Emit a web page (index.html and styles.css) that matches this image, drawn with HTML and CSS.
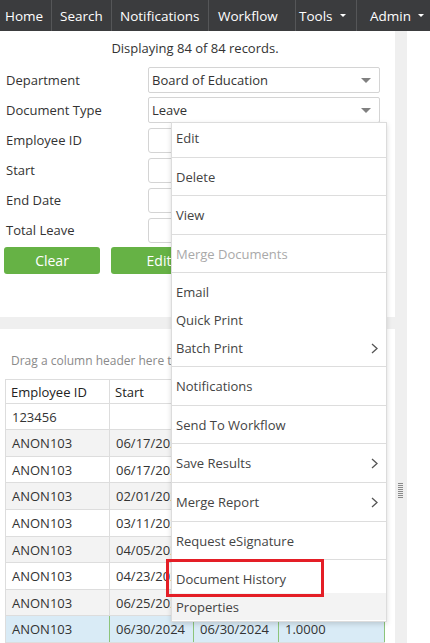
FILE: index.html
```html
<!DOCTYPE html>
<html lang="en">
<head>
    <meta charset="UTF-8">
    <meta name="viewport" content="width=device-width, initial-scale=1.0">
    <title>Document Search</title>
    <link rel="stylesheet" href="styles.css">
</head>
<body>

<!-- Top navigation -->
<div class="topnav">
    <div class="nav-item nav-home">Home</div>
    <div class="nav-item nav-search">Search</div>
    <div class="nav-item nav-notif">Notifications</div>
    <div class="nav-item nav-workflow">Workflow</div>
    <div class="nav-item nav-tools">Tools <span class="nav-caret"></span></div>
    <div class="nav-item nav-admin">Admin <span class="nav-caret"></span></div>
</div>

<div class="workspace">
    <div class="main">

        <!-- Search form -->
        <div class="search-panel">
            <div class="record-count">Displaying 84 of 84 records.</div>

            <div class="form-row">
                <label>Department</label>
                <div class="select-box">Board of Education <span class="select-caret"></span></div>
            </div>
            <div class="form-row">
                <label>Document Type</label>
                <div class="select-box">Leave <span class="select-caret"></span></div>
            </div>
            <div class="form-row">
                <label>Employee ID</label>
                <div class="input-box"></div>
            </div>
            <div class="form-row">
                <label>Start</label>
                <div class="input-box"></div>
            </div>
            <div class="form-row">
                <label>End Date</label>
                <div class="input-box"></div>
            </div>
            <div class="form-row">
                <label>Total Leave</label>
                <div class="input-box"></div>
            </div>

            <div class="button-row">
                <button class="button">Clear</button>
                <button class="button">Edit</button>
                <button class="button">Search</button>
            </div>
        </div>

        <div class="band"></div>

        <!-- Results grid -->
        <div class="grid-panel">
            <div class="group-hint">Drag a column header here to group by that column</div>

            <div class="grid">
                <div class="grid-row grid-head">
                    <div class="cell">Employee ID</div>
                    <div class="cell">Start</div>
                    <div class="cell">End Date</div>
                    <div class="cell">Total Leave</div>
                </div>
                <div class="grid-row">
                    <div class="cell">123456</div>
                    <div class="cell"></div>
                    <div class="cell"></div>
                    <div class="cell"></div>
                </div>
                <div class="grid-row alt">
                    <div class="cell">ANON103</div>
                    <div class="cell">06/17/2024</div>
                    <div class="cell">06/17/2024</div>
                    <div class="cell">1.0000</div>
                </div>
                <div class="grid-row">
                    <div class="cell">ANON103</div>
                    <div class="cell">06/17/2024</div>
                    <div class="cell">06/17/2024</div>
                    <div class="cell">1.0000</div>
                </div>
                <div class="grid-row alt">
                    <div class="cell">ANON103</div>
                    <div class="cell">02/01/2024</div>
                    <div class="cell">02/01/2024</div>
                    <div class="cell">1.0000</div>
                </div>
                <div class="grid-row">
                    <div class="cell">ANON103</div>
                    <div class="cell">03/11/2024</div>
                    <div class="cell">03/11/2024</div>
                    <div class="cell">1.0000</div>
                </div>
                <div class="grid-row alt">
                    <div class="cell">ANON103</div>
                    <div class="cell">04/05/2024</div>
                    <div class="cell">04/05/2024</div>
                    <div class="cell">1.0000</div>
                </div>
                <div class="grid-row">
                    <div class="cell">ANON103</div>
                    <div class="cell">04/23/2024</div>
                    <div class="cell">04/23/2024</div>
                    <div class="cell">1.0000</div>
                </div>
                <div class="grid-row alt">
                    <div class="cell">ANON103</div>
                    <div class="cell">06/25/2024</div>
                    <div class="cell">06/25/2024</div>
                    <div class="cell">1.0000</div>
                </div>
                <div class="grid-row selected">
                    <div class="cell">ANON103</div>
                    <div class="cell">06/30/2024</div>
                    <div class="cell">06/30/2024</div>
                    <div class="cell">1.0000</div>
                </div>
            </div>
        </div>
    </div>

    <div class="splitter"><span class="grip"></span></div>
    <div class="side"></div>
</div>

<!-- Row context menu -->
<div class="context-menu">
    <div class="menu-item">Edit</div>
    <div class="menu-sep"></div>
    <div class="menu-item">Delete</div>
    <div class="menu-sep"></div>
    <div class="menu-item">View</div>
    <div class="menu-sep"></div>
    <div class="menu-item disabled">Merge Documents</div>
    <div class="menu-sep"></div>
    <div class="menu-item">Email</div>
    <div class="menu-item">Quick Print</div>
    <div class="menu-item">Batch Print
        <svg class="chevron" width="7" height="11" viewBox="0 0 7 11"><polyline points="1,1 6,5.5 1,10" fill="none" stroke="#555" stroke-width="1.3"/></svg>
    </div>
    <div class="menu-sep"></div>
    <div class="menu-item">Notifications</div>
    <div class="menu-sep"></div>
    <div class="menu-item">Send To Workflow</div>
    <div class="menu-sep"></div>
    <div class="menu-item">Save Results
        <svg class="chevron" width="7" height="11" viewBox="0 0 7 11"><polyline points="1,1 6,5.5 1,10" fill="none" stroke="#555" stroke-width="1.3"/></svg>
    </div>
    <div class="menu-sep"></div>
    <div class="menu-item">Merge Report
        <svg class="chevron" width="7" height="11" viewBox="0 0 7 11"><polyline points="1,1 6,5.5 1,10" fill="none" stroke="#555" stroke-width="1.3"/></svg>
    </div>
    <div class="menu-sep"></div>
    <div class="menu-item">Request eSignature</div>
    <div class="menu-sep"></div>
    <div class="menu-item">Document History</div>
    <div class="menu-item hover">Properties</div>
</div>

<!-- Annotation box -->
<div class="highlight-box"></div>

</body>
</html>
```

FILE: styles.css
```css
body {
    margin: 0;
    font-family: "Open Sans", "Noto Sans", Arial, sans-serif;
    font-size: 13px;
    color: #333;
    background-color: #ffffff;
    overflow: hidden;
}

/* Top navigation */
.topnav {
    display: flex;
    height: 31px;
    background-color: #3b3c3e;
    color: #ffffff;
    font-size: 13.5px;
    white-space: nowrap;
    overflow: hidden;
}
.nav-item {
    display: flex;
    align-items: center;
    flex-shrink: 0;
    box-sizing: border-box;
    border-right: 1px solid #555658;
}
.nav-home {
    width: 52px;
    padding-left: 5px;
}
.nav-search {
    width: 60px;
    padding-left: 8px;
}
.nav-notif {
    width: 97px;
    padding-left: 8px;
}
.nav-workflow {
    width: 87px;
    padding-left: 9px;
}
.nav-tools {
    width: 61px;
    padding-left: 3px;
}
.nav-admin {
    width: 74px;
    padding-left: 13px;
    border-right: none;
}
.nav-caret {
    display: inline-block;
    width: 0;
    height: 0;
    margin-left: 7px;
    border-left: 3px solid transparent;
    border-right: 3px solid transparent;
    border-top: 3px solid #ffffff;
}

/* Page layout */
.workspace {
    display: flex;
    height: 612px;
}
.main {
    width: 395px;
    display: flex;
    flex-direction: column;
}
.splitter {
    width: 12px;
    background-color: #efefef;
    position: relative;
}
.grip {
    position: absolute;
    left: 3px;
    top: 452px;
    width: 5px;
    height: 16px;
    background: repeating-linear-gradient(to bottom, #8a8a8a 0, #8a8a8a 1px, transparent 1px, transparent 2px);
}
.side {
    flex: 1;
}
.band {
    height: 12px;
    background-color: #efefef;
}

/* Search form */
.search-panel {
    height: 288px;
    padding: 8px 0 0 0;
    box-sizing: border-box;
}
.record-count {
    text-align: center;
    padding-right: 5px;
    line-height: 18px;
    margin-bottom: 10px;
}
.form-row {
    display: flex;
    align-items: center;
    height: 26px;
    margin-bottom: 4px;
}
.form-row label {
    width: 142px;
    padding-left: 6px;
}
.select-box {
    position: relative;
    width: 232px;
    height: 26px;
    box-sizing: border-box;
    border: 1px solid #d4d4d4;
    border-radius: 2px;
    padding-left: 3px;
    line-height: 24px;
}
.select-caret {
    position: absolute;
    right: 8px;
    top: 10px;
    width: 0;
    height: 0;
    border-left: 5px solid transparent;
    border-right: 5px solid transparent;
    border-top: 5px solid #808080;
}
.input-box {
    width: 232px;
    height: 25px;
    box-sizing: border-box;
    border: 1px solid #d4d4d4;
    border-radius: 3px;
}
.button-row {
    display: flex;
    gap: 11px;
    padding-left: 4px;
    margin-top: 2px;
}
.button {
    width: 96px;
    height: 27px;
    border: none;
    border-radius: 3px;
    background-color: #66b245;
    color: #ffffff;
    font-family: inherit;
    font-size: 14px;
}

/* Results grid */
.grid-panel {
    flex: 1;
    padding: 23px 0 0 5px;
}
.group-hint {
    color: #8a8a8a;
    font-size: 12px;
    padding-left: 6px;
    line-height: 17px;
    margin-bottom: 10px;
    white-space: nowrap;
}
.grid {
    width: 379px;
    border-left: 1px solid #dddddd;
    border-top: 1px solid #dddddd;
}
.grid-row {
    display: grid;
    grid-template-columns: 104px 84px 85px 106px;
    height: 26.6px;
    box-sizing: border-box;
    border-bottom: 1px solid #dddddd;
}
.grid-row.alt {
    background-color: #f3f3f3;
}
.grid-row.selected {
    background-color: #d9ebf6;
}
.grid-row.selected .cell {
    border-right-color: #8cc47a;
}
.grid-head {
    height: 24px;
    color: #222;
}
.cell {
    border-right: 1px solid #dddddd;
    padding-left: 6px;
    padding-top: 1px;
    line-height: 24px;
    white-space: nowrap;
    overflow: hidden;
}
.grid-head .cell {
    padding-left: 5px;
    line-height: 22px;
}

/* Context menu */
.context-menu {
    position: absolute;
    left: 171px;
    top: 122px;
    width: 216px;
    height: 500px;
    box-sizing: border-box;
    padding-top: 1px;
    background-color: #ffffff;
    border: 1px solid #dcdcdc;
    box-shadow: 0 2px 5px rgba(0, 0, 0, 0.15);
    color: #444;
}
.menu-item {
    position: relative;
    height: 27.6px;
    line-height: 28.6px;
    padding-left: 4px;
}
.menu-item.disabled {
    color: #a9a9a9;
}
.menu-item.hover {
    background-color: #f3f3f3;
}
.chevron {
    position: absolute;
    right: 8px;
    top: 9px;
}
.menu-sep {
    height: 1px;
    margin: 5px 0;
    background-color: #dddddd;
}

.highlight-box {
    position: absolute;
    left: 166px;
    top: 559px;
    width: 152px;
    height: 32px;
    border: 3px solid #e41e26;
}
```
